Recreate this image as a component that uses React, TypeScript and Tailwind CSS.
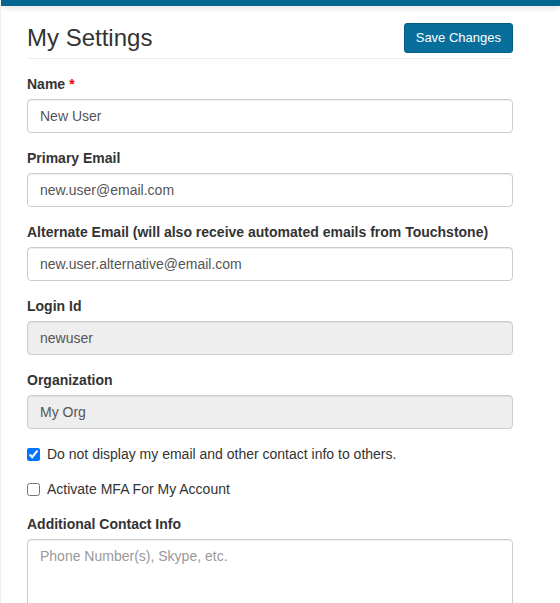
import React from 'react';

type Field = {
  label: string;
  value: string;
  required?: boolean;
  readOnly?: boolean;
};

const fields: Field[] = [
  { label: 'Name', value: 'New User', required: true },
  { label: 'Primary Email', value: 'new.user@email.com' },
  { label: 'Alternate Email (will also receive automated emails from Touchstone)', value: 'new.user.alternative@email.com' },
  { label: 'Login Id', value: 'newuser', readOnly: true },
  { label: 'Organization', value: 'My Org', readOnly: true },
];

function FormGroup({ field }: { field: Field }) {
  return (
    <div className="mb-[15px]">
      <label className="block mb-[5px] text-[14px] leading-5 font-bold text-[#333]">
        {field.label}
        {field.required && <span className="text-[#e00] ml-1">*</span>}
      </label>
      <input
        type="text"
        defaultValue={field.value}
        readOnly={field.readOnly}
        className={`block w-full h-[34px] px-3 text-[14px] text-[#555] border border-[#ccc] rounded shadow-[inset_0_1px_1px_rgba(0,0,0,0.075)] outline-none ${
          field.readOnly ? 'bg-[#eee]' : 'bg-white'
        }`}
      />
    </div>
  );
}

export default function App() {
  return (
    <div className="h-[603px] overflow-hidden bg-white font-['Liberation_Sans',Arial,sans-serif] text-[#333] border-l border-[#eee]">
      <div className="h-[6px] bg-[#04668e] shadow-[0_2px_6px_rgba(0,0,0,0.12)]" />
      <div className="w-[486px] ml-[26px]">
        <div className="flex items-start justify-between h-[53px] pt-[17px] border-b border-[#eee]">
          <h1 className="text-[24px] leading-none text-[#333] mt-[3px]">My Settings</h1>
          <button className="h-[30px] px-[11px] text-[13px] text-white bg-[#086f9c] border border-[#045c85] rounded-[3px]">
            Save Changes
          </button>
        </div>

        <form className="pt-[15px]">
          {fields.map((f) => (
            <FormGroup key={f.label} field={f} />
          ))}

          <label className="flex items-center gap-[7px] h-5 mt-px text-[14px] text-[#333]">
            <input type="checkbox" defaultChecked className="w-[13px] h-[13px] m-0 accent-[#0075ff]" />
            Do not display my email and other contact info to others.
          </label>
          <label className="flex items-center gap-[7px] h-5 mt-[15px] text-[14px] text-[#333]">
            <input type="checkbox" className="w-[13px] h-[13px] m-0 accent-[#0075ff]" />
            Activate MFA For My Account
          </label>

          <div className="mt-[15px]">
            <label className="block mb-[5px] text-[14px] leading-5 font-bold text-[#333]">Additional Contact Info</label>
            <textarea
              placeholder="Phone Number(s), Skype, etc."
              className="block w-full h-[100px] px-3 py-[6px] text-[14px] text-[#555] placeholder:text-[#999] border border-[#ccc] rounded shadow-[inset_0_1px_1px_rgba(0,0,0,0.075)] outline-none resize-none"
            />
          </div>
        </form>
      </div>
    </div>
  );
}
